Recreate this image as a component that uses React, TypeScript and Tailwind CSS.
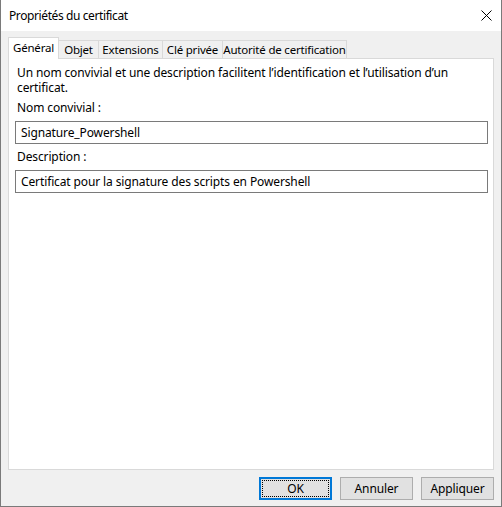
import React from 'react';

const font = { fontFamily: '"Noto Sans", "Segoe UI", Arial, sans-serif' };

const tabs = [
  { label: 'Général', w: 'w-[51px]' },
  { label: 'Objet', w: 'w-[40px]' },
  { label: 'Extensions', w: 'w-[64px]' },
  { label: 'Clé privée', w: 'w-[60px]' },
  { label: 'Autorité de certification', w: 'w-[124px]' },
];

function Field({ label, value, top }: { label: string; value: string; top: string }) {
  return (
    <div className={top}>
      <div className="pl-[2px] h-[15px] leading-[15px]">{label}</div>
      <div className="mt-[6px] h-[23px] border border-[#7a7a7a] bg-white pl-[5px] leading-[21px] whitespace-nowrap">
        {value}
      </div>
    </div>
  );
}

export default function App() {
  return (
    <div
      className="w-[502px] h-[507px] flex flex-col bg-[#f0f0f0] border-x border-b border-[#7a7a7a] text-[12px] tracking-[-0.12px] text-black"
      style={font}
    >
      {/* title bar */}
      <div className="h-[31px] bg-white flex items-center justify-between pl-[8px] pr-[9px] shrink-0">
        <span className="text-[12px] tracking-[-0.4px]">Propriétés du certificat</span>
        <svg width="11" height="11" viewBox="0 0 11 11">
          <path d="M0.5 0.5 L10.5 10.5 M10.5 0.5 L0.5 10.5" stroke="#000" strokeWidth="1" />
        </svg>
      </div>

      {/* body */}
      <div className="flex-1 flex flex-col px-[7px] pt-[6px]">
        {/* tab strip */}
        <div className="flex items-end h-[22px] relative z-10 -mb-px text-[11.5px] tracking-[-0.2px]">
          {tabs.map((t, i) =>
            i === 0 ? (
              <div
                key={t.label}
                className={`${t.w} h-[22px] bg-white border-x border-t border-[#d9d9d9] flex justify-center leading-[19px] whitespace-nowrap`}
              >
                {t.label}
              </div>
            ) : (
              <div
                key={t.label}
                className={`${t.w} h-[19px] bg-[#f0f0f0] border-t border-r border-b border-[#d9d9d9] flex justify-center leading-[18px] whitespace-nowrap`}
              >
                {t.label}
              </div>
            )
          )}
        </div>

        {/* panel */}
        <div className="h-[412px] bg-white border border-[#d9d9d9] pl-[6px] pr-[5px] pt-[6px]">
          <div className="pl-[2px] leading-[15px] whitespace-nowrap">
            <div>Un nom convivial et une description facilitent l’identification et l’utilisation d’un</div>
            <div>certificat.</div>
          </div>
          <Field label="Nom convivial :" value="Signature_Powershell" top="mt-[5px]" />
          <Field label="Description :" value="Certificat pour la signature des scripts en Powershell" top="mt-[5px]" />
        </div>

        {/* buttons */}
        <div className="flex justify-end gap-[8px] mt-[7px]">
          <button className="w-[73px] h-[23px] bg-[#e1e1e1] border-2 border-[#0078d7] p-[1px]">
            <div className="w-full h-full border border-dotted border-black flex items-center justify-center leading-none">
              OK
            </div>
          </button>
          <button className="w-[73px] h-[23px] bg-[#e1e1e1] border border-[#adadad] flex items-center justify-center leading-none">
            Annuler
          </button>
          <button className="w-[73px] h-[23px] bg-[#e1e1e1] border border-[#adadad] flex items-center justify-center leading-none">
            Appliquer
          </button>
        </div>
      </div>
    </div>
  );
}
